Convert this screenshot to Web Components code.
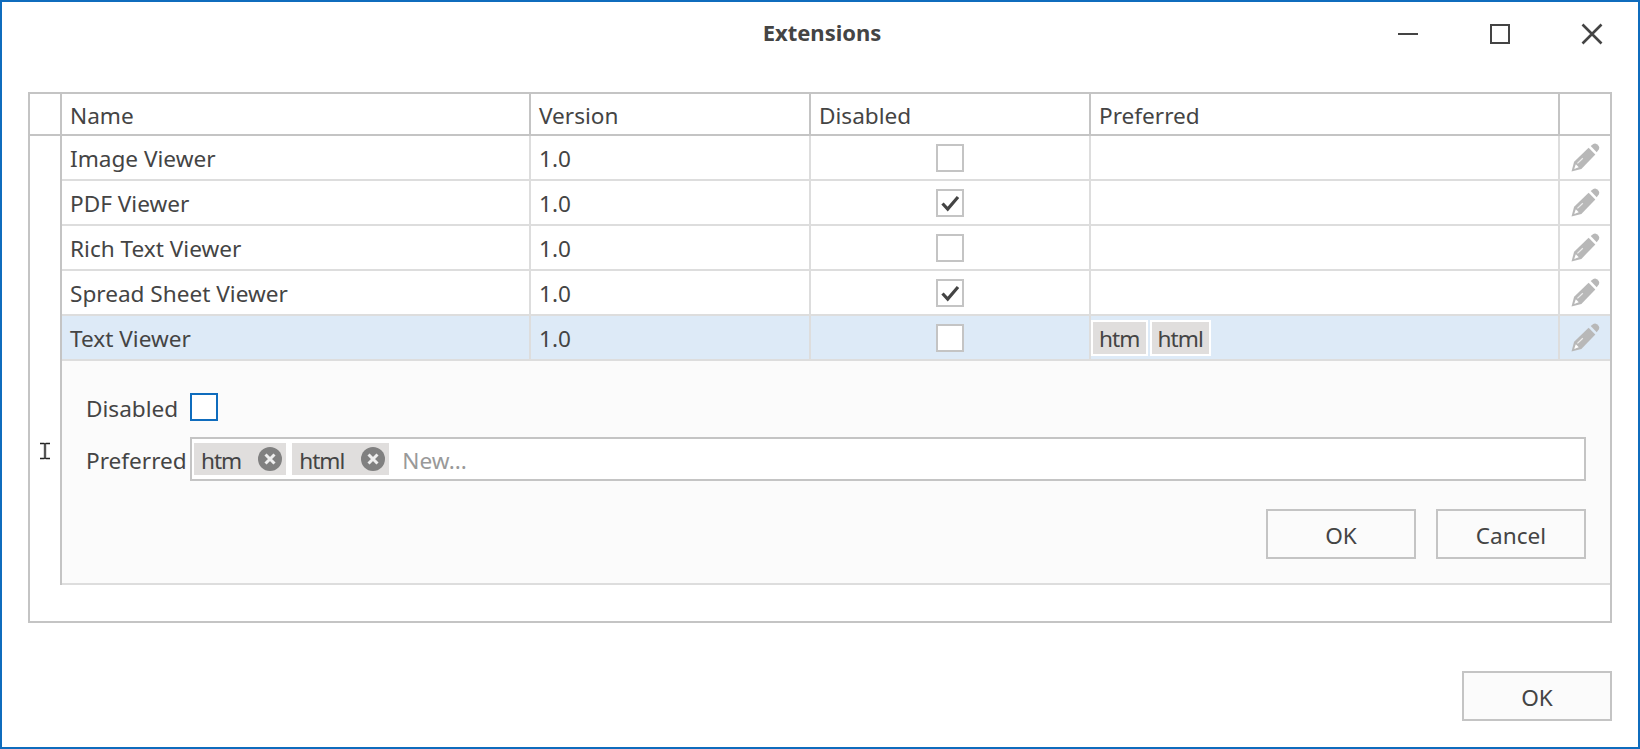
<!DOCTYPE html>
<html>
<head>
<meta charset="utf-8">
<title>Extensions</title>
<style>
  html, body { margin: 0; padding: 0; background: #fff; overflow: hidden; }
  body { font: 22.6px "Noto Sans", "Open Sans", sans-serif; color: #444; }
</style>
</head>
<body>
<ext-window heading="Extensions">
  <ext-grid>
    <ext-row slot="head" head>
      <span>Name</span><span>Version</span><span>Disabled</span><span>Preferred</span><span></span>
    </ext-row>
    <ext-row><span>Image Viewer</span><span>1.0</span><ext-check></ext-check><span></span><ext-pencil></ext-pencil></ext-row>
    <ext-row><span>PDF Viewer</span><span>1.0</span><ext-check checked></ext-check><span></span><ext-pencil></ext-pencil></ext-row>
    <ext-row><span>Rich Text Viewer</span><span>1.0</span><ext-check></ext-check><span></span><ext-pencil></ext-pencil></ext-row>
    <ext-row><span>Spread Sheet Viewer</span><span>1.0</span><ext-check checked></ext-check><span></span><ext-pencil></ext-pencil></ext-row>
    <ext-row selected><span>Text Viewer</span><span>1.0</span><ext-check></ext-check><ext-tags><ext-tag>htm</ext-tag><ext-tag>html</ext-tag></ext-tags><ext-pencil></ext-pencil></ext-row>
    <ext-detail>
      <span slot="disabled-label">Disabled</span>
      <ext-check slot="disabled" focused></ext-check>
      <span slot="preferred-label">Preferred</span>
      <ext-token-box slot="preferred" placeholder="New...">
        <ext-token>htm</ext-token>
        <ext-token>html</ext-token>
      </ext-token-box>
      <ext-button slot="actions">OK</ext-button>
      <ext-button slot="actions">Cancel</ext-button>
    </ext-detail>
  </ext-grid>
  <ext-button slot="footer">OK</ext-button>
</ext-window>

<script>
class ShadowBase extends HTMLElement {
  constructor() {
    super();
    this.attachShadow({ mode: "open" });
    this.shadowRoot.innerHTML = this.markup();
  }
}

class ExtWindow extends ShadowBase {
  markup() {
    return `
    <style>
      :host { display: flex; flex-direction: column; box-sizing: border-box; width: 1640px; height: 749px; border: 2px solid #0f6cbd; background: #fff; }
      .titlebar { display: grid; grid-template-columns: 1fr auto 1fr; height: 90px; flex: none; }
      .heading { grid-column: 2; padding: 15px 0 0 4px; font-size: 22px; font-weight: 700; line-height: 30px; }
      .controls { grid-column: 3; justify-self: end; display: flex; }
      .controls svg { display: block; width: 92px; height: 64px; }
      .content { padding: 0 26px; }
      .footer { display: flex; justify-content: flex-end; padding: 48px 26px 26px; }
    </style>
    <div class="titlebar">
      <div class="heading">${this.getAttribute("heading")}</div>
      <div class="controls">
        <svg viewBox="0 0 92 64"><path d="M36 32h20" stroke="#444" stroke-width="2" fill="none"/></svg>
        <svg viewBox="0 0 92 64"><rect x="37" y="23" width="18" height="18" stroke="#444" stroke-width="2" fill="none"/></svg>
        <svg viewBox="0 0 92 64"><path d="M36.500 22.500l19 19M55.500 22.500l-19 19" stroke="#444" stroke-width="2.600" fill="none"/></svg>
      </div>
    </div>
    <div class="content"><slot></slot></div>
    <div class="footer"><slot name="footer"></slot></div>`;
  }
}

class ExtGrid extends ShadowBase {
  markup() {
    return `
    <style>
      :host { display: block; position: relative; box-sizing: border-box; height: 531px; border: 2px solid #c4c4c4; --cols: 469px 280px 280px 469px 50px; }
      .body { display: flex; }
      .gutter { flex: none; width: 30px; border-right: 2px solid #c4c4c4; }
      .rows { flex: 1; min-width: 0; }
      .cursor { position: absolute; left: 9px; top: 348px; width: 12px; height: 18px; }
    </style>
    <slot name="head"></slot>
    <div class="body">
      <div class="gutter"></div>
      <div class="rows"><slot></slot></div>
    </div>
    <svg class="cursor" viewBox="0 0 12 18">
      <path d="M1 1.500h4l1 1 1-1h4M1 16.500h4l1-1 1 1h4" stroke="#222" stroke-width="1.400" fill="none"/>
      <path d="M6 2.500v13" stroke="#555" stroke-width="2.400" fill="none"/>
    </svg>`;
  }
}

class ExtRow extends ShadowBase {
  markup() {
    return `
    <style>
      :host { display: grid; grid-template-columns: var(--cols); grid-template-rows: 43px; box-sizing: border-box; height: 45px; border-bottom: 2px solid #ddd; line-height: 40px; }
      :host([selected]) { background: #ddeaf7; }
      :host([head]) { grid-template-columns: 32px var(--cols); grid-template-rows: 40px; height: 42px; line-height: 37px; border-bottom-color: #c4c4c4; }
      :host([head])::before { content: ""; border-right: 2px solid #c4c4c4; }
      ::slotted(*) { box-sizing: border-box; border-right: 2px solid #ddd; padding: 3px 0 0 8px; white-space: nowrap; min-width: 0; }
      :host([head]) ::slotted(*) { border-right-color: #c4c4c4; }
      ::slotted(:last-child) { border-right: 0; padding: 0; }
      ::slotted(ext-check) { padding: 0; }
      ::slotted(ext-tags) { padding: 0; }
    </style>
    <slot></slot>`;
  }
}

class ExtCheck extends ShadowBase {
  markup() {
    return `
    <style>
      :host { display: flex; align-items: center; justify-content: center; }
      .box { box-sizing: border-box; width: 28px; height: 28px; border: 2px solid #c4c4c4; background: #fff; }
      :host([focused]) .box { border-color: #0f6cbd; }
      svg { display: block; width: 24px; height: 24px; }
    </style>
    <div class="box">${this.hasAttribute("checked") ? `<svg viewBox="0 0 24 24"><path d="M4.500 12.500l5.200 5.500 10.300-12" stroke="#444" stroke-width="3.200" fill="none"/></svg>` : ""}</div>`;
  }
}

class ExtPencil extends ShadowBase {
  markup() {
    return `
    <style>
      :host { display: flex; align-items: center; justify-content: center; }
      svg { display: block; width: 29px; height: 29px; }
    </style>
    <svg viewBox="0 0 28 28">
      <path fill="#b8b8b8" d="M.500 27.500L3 18 17 4.500 23.500 11 10 25z"/>
      <path fill="#b8b8b8" d="M19 3L21.500 1Q23.300.100 25 1.200L26.800 3Q27.900 4.700 26.800 6.300L24.800 9z"/>
      <path fill="#fff" d="M3 25L4.700 20.500 7.500 23.300z"/>
      <path fill="#eee" d="M5.800 19.300L11 14.300 11.800 15.100 6.600 20.100z"/>
    </svg>`;
  }
}

class ExtTags extends ShadowBase {
  markup() {
    return `
    <style>
      :host { display: flex; align-items: center; gap: 2px; }
    </style>
    <slot></slot>`;
  }
}

class ExtTag extends ShadowBase {
  markup() {
    return `
    <style>
      :host { display: block; height: 32px; padding: 0 6px; border: 2px solid #fff; background: #e0dedd; line-height: 34px; letter-spacing: -.9px; }
    </style>
    <slot></slot>`;
  }
}

class ExtDetail extends ShadowBase {
  markup() {
    return `
    <style>
      :host { display: flex; flex-direction: column; box-sizing: border-box; height: 224px; padding: 32px 24px 24px 24px; background: #fbfbfb; border-bottom: 2px solid #ddd; }
      .field { display: flex; align-items: center; }
      .label { flex: none; box-sizing: border-box; width: 104px; height: 28px; padding-top: 2px; line-height: 28px; white-space: nowrap; }
      .grow { flex: 1; min-width: 0; }
      .actions { display: flex; justify-content: flex-end; gap: 20px; margin-top: 28px; }
    </style>
    <div class="field" style="margin-bottom:16px">
      <div class="label"><slot name="disabled-label"></slot></div>
      <slot name="disabled"></slot>
    </div>
    <div class="field">
      <div class="label"><slot name="preferred-label"></slot></div>
      <div class="grow"><slot name="preferred"></slot></div>
    </div>
    <div class="actions"><slot name="actions"></slot></div>`;
  }
}

class ExtTokenBox extends ShadowBase {
  markup() {
    return `
    <style>
      :host { display: flex; align-items: center; box-sizing: border-box; height: 44px; padding: 0 4px 0 2px; border: 2px solid #c4c4c4; background: #fff; gap: 6px; line-height: 32px; }
      .placeholder { margin-left: 7px; padding-top: 3px; color: #999; }
    </style>
    <slot></slot>
    <span class="placeholder">${this.getAttribute("placeholder")}</span>`;
  }
}

class ExtToken extends ShadowBase {
  markup() {
    return `
    <style>
      :host { display: flex; align-items: center; box-sizing: border-box; height: 32px; padding: 3px 4px 0 7px; background: #e0dedd; letter-spacing: -1px; }
      svg { display: block; width: 24px; height: 24px; margin: -3px 0 0 17px; }
    </style>
    <slot></slot>
    <svg viewBox="0 0 24 24"><circle cx="12" cy="12" r="12" fill="#808080"/><path d="M7.500 7.500l9 9M16.500 7.500l-9 9" stroke="#eee" stroke-width="3" fill="none"/></svg>`;
  }
}

class ExtButton extends ShadowBase {
  markup() {
    return `
    <style>
      :host { display: flex; align-items: center; justify-content: center; box-sizing: border-box; width: 150px; height: 50px; padding-top: 2px; border: 2px solid #c4c4c4; background: #fbfbfb; }
    </style>
    <slot></slot>`;
  }
}

customElements.define("ext-window", ExtWindow);
customElements.define("ext-grid", ExtGrid);
customElements.define("ext-row", ExtRow);
customElements.define("ext-check", ExtCheck);
customElements.define("ext-pencil", ExtPencil);
customElements.define("ext-tags", ExtTags);
customElements.define("ext-tag", ExtTag);
customElements.define("ext-detail", ExtDetail);
customElements.define("ext-token-box", ExtTokenBox);
customElements.define("ext-token", ExtToken);
customElements.define("ext-button", ExtButton);
</script>
</body>
</html>
